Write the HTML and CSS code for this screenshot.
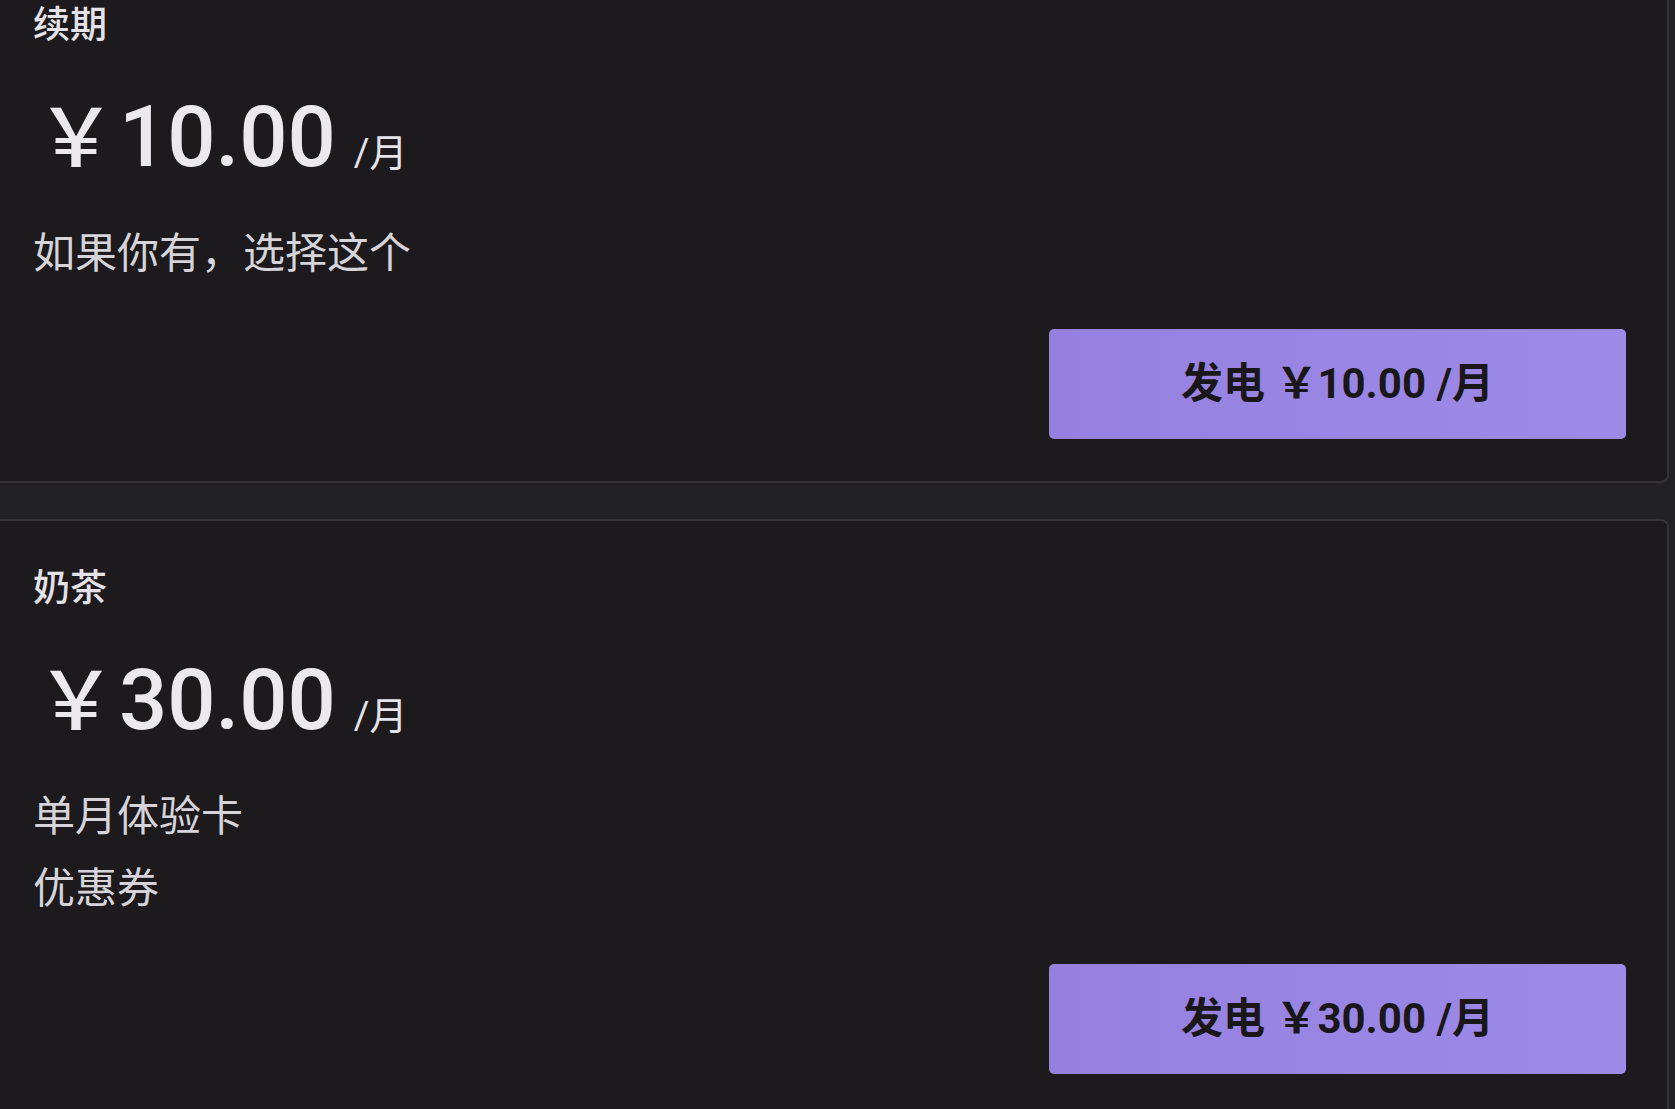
FILE: index.html
```html
<!DOCTYPE html>
<html lang="zh-CN">
<head>
<meta charset="utf-8">
<title>发电方案</title>
<link rel="stylesheet" href="styles.css">
</head>
<body>
<div class="list">
  <section class="card">
    <h3 class="card-title">续期</h3>
    <div class="price"><span class="price-currency">￥</span><span class="price-amount">10.00</span><span class="price-unit">/月</span></div>
    <div class="desc">
      <p>如果你有，选择这个</p>
    </div>
    <button class="btn"><span class="btn-label">发电 ￥10.00 /月</span></button>
  </section>
  <section class="card">
    <h3 class="card-title">奶茶</h3>
    <div class="price"><span class="price-currency">￥</span><span class="price-amount">30.00</span><span class="price-unit">/月</span></div>
    <div class="desc">
      <p>单月体验卡</p>
      <p>优惠券</p>
    </div>
    <button class="btn"><span class="btn-label">发电 ￥30.00 /月</span></button>
  </section>
</div>
</body>
</html>
```
FILE: styles.css
```css
html, body {
  margin: 0;
  padding: 0;
  background: #222124;
  overflow: hidden;
  height: 100%;
}

body {
  font-family: Roboto, "Noto Sans CJK SC", sans-serif;
  color: #e6e4e8;
}

.list {
  display: flex;
  flex-direction: column;
  gap: 36px;
  margin: -44px 6px 0 -20px;
}

.card {
  display: flex;
  flex-direction: column;
  background: #1c1a1d;
  border: 2px solid #353339;
  border-radius: 8px;
  padding: 44px 41px 42px 51px;
}

.card-title {
  margin: 0;
  font-family: "Noto Sans CJK SC", sans-serif;
  font-size: 37px;
  font-weight: 500;
  line-height: 40px;
  color: #e4e2e6;
}

.price {
  margin-top: 35px;
  line-height: 120px;
  height: 120px;
  white-space: nowrap;
  color: #ebe9ee;
}

.price-currency {
  font-family: "Noto Sans CJK SC", sans-serif;
  font-size: 80px;
  font-weight: 500;
  line-height: 1;
  margin-left: 3px;
}

.price-amount {
  font-family: Roboto, sans-serif;
  font-size: 85px;
  font-weight: 500;
  margin-left: 3px;
}

.price-unit {
  font-family: Roboto, "Noto Sans CJK SC", sans-serif;
  font-size: 38px;
  line-height: 1;
  margin-left: 18px;
  color: #e6e4e8;
}

.desc {
  margin-top: 17px;
}

.desc p {
  margin: 0;
  font-family: "Noto Sans CJK SC", sans-serif;
  font-size: 42px;
  line-height: 72px;
  color: #d6d4d8;
}

.btn {
  align-self: flex-end;
  margin-top: 43px;
  width: 577px;
  height: 110px;
  border: none;
  border-radius: 5px;
  background: linear-gradient(90deg, #9580df, #9d8be8);
  display: flex;
  align-items: center;
  justify-content: center;
  padding: 0;
  cursor: pointer;
}

.btn-label {
  font-family: Roboto, "Noto Sans CJK SC", sans-serif;
  font-size: 42px;
  font-weight: 700;
  line-height: 1;
  color: #19171a;
  white-space: nowrap;
}
```
